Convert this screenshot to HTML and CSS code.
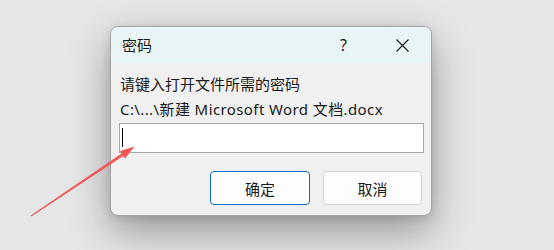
FILE: index.html
```html
<!DOCTYPE html>
<html lang="zh-CN">
<head>
    <meta charset="UTF-8">
    <title>密码</title>
    <link rel="stylesheet" href="styles.css">
</head>
<body>
    <div class="dialog">
        <div class="titlebar">
            <span class="title">密码</span>
            <span class="help">?</span>
            <span class="close">
                <svg width="13" height="13" viewBox="0 0 13 13">
                    <path d="M0.5 0.5 L12.5 12.5 M12.5 0.5 L0.5 12.5" stroke="#1a1a1a" stroke-width="1.1" fill="none"/>
                </svg>
            </span>
        </div>
        <div class="content">
            <div class="label">请键入打开文件所需的密码</div>
            <div class="label path">C:\...\新建 Microsoft Word 文档.docx</div>
            <div class="field"><span class="caret"></span></div>
            <div class="buttons">
                <button class="btn btn-default">确定</button>
                <button class="btn">取消</button>
            </div>
        </div>
    </div>
    <!-- red arrow drawn over the screenshot -->
    <svg class="arrow" width="554" height="250" viewBox="0 0 554 250">
        <polygon points="30.7,215.6 121.6,153.6 120,151 134.5,146.5 125,158.5 123.2,156 31.3,216.4" fill="#f25656"/>
    </svg>
</body>
</html>
```

FILE: styles.css
```css
body {
    margin: 0;
    width: 554px;
    height: 250px;
    padding: 26px 0 0 110px;
    box-sizing: border-box;
    overflow: hidden;
    background-color: #e6e6e6;
    font-family: "Noto Sans", "Noto Sans CJK SC", sans-serif;
    font-size: 15px;
    color: #1a1a1a;
}

.dialog {
    width: 322px;
    height: 190px;
    box-sizing: border-box;
    border: 1px solid #a3a3a3;
    border-radius: 8px;
    background-color: #f0f0f0;
    overflow: hidden;
    box-shadow: 0 16px 40px rgba(0, 0, 0, 0.34), 0 2px 10px rgba(0, 0, 0, 0.12);
}

.titlebar {
    height: 36px;
    display: flex;
    align-items: center;
    background-color: #e9f4f7;
    padding-left: 11px;
}

.title {
    flex: 1;
    line-height: 20px;
}

.help {
    width: 14px;
    margin-right: 42px;
    font-size: 16px;
    line-height: 20px;
}

.close {
    display: flex;
    margin-right: 22px;
}

.content {
    padding: 9px 7px 0 8px;
}

.label {
    line-height: 25px;
    padding-left: 1px;
    white-space: nowrap;
}

.path {
    letter-spacing: 0.4px;
}

.field {
    height: 30px;
    margin-top: 1px;
    box-sizing: border-box;
    border: 1px solid #a6a6a6;
    background-color: #fff;
    padding: 4px 0 0 2px;
}

.caret {
    display: block;
    width: 1px;
    height: 19px;
    background-color: #000;
}

.buttons {
    display: flex;
    justify-content: flex-end;
    gap: 13px;
    margin-top: 18px;
    padding-right: 2px;
}

.btn {
    width: 99px;
    height: 34px;
    box-sizing: border-box;
    border: 1px solid #d0d0d0;
    border-radius: 4px;
    background-color: #fdfdfd;
    font-family: inherit;
    font-size: 15px;
    color: #1a1a1a;
    padding: 0;
}

.btn-default {
    width: 100px;
    border: 1.5px solid #0a6cc4;
}

.arrow {
    position: absolute;
    top: 0;
    left: 0;
    pointer-events: none;
}
```
